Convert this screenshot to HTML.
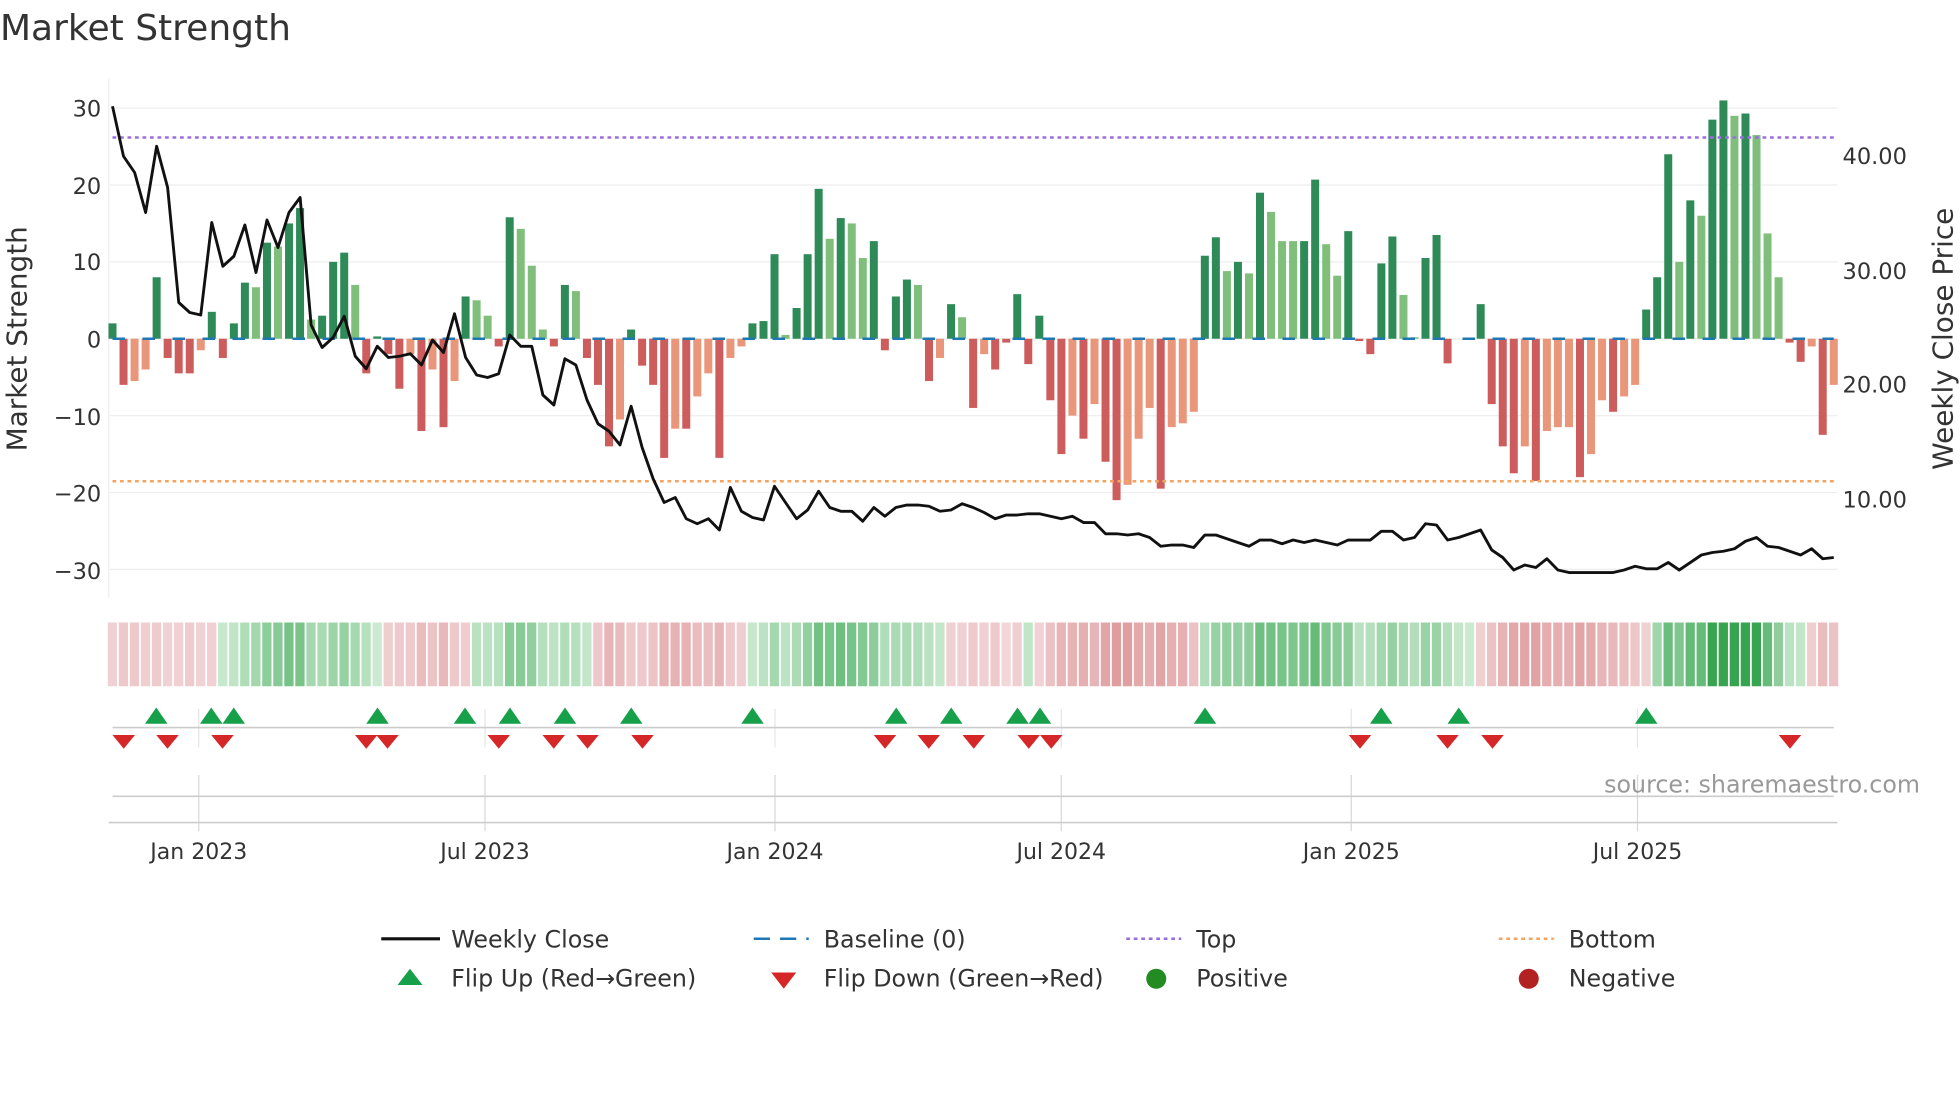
<!DOCTYPE html>
<html><head><meta charset="utf-8"><style>
html,body{margin:0;padding:0;background:#fff;}
svg{display:block;}
text{font-family:"DejaVu Sans","Liberation Sans",sans-serif;fill:#333;}
</style></head><body>
<svg id="s" width="1960" height="1102" viewBox="0 0 1568 881.6" xmlns="http://www.w3.org/2000/svg">
<rect width="1568" height="881.6" fill="#fff"/>
<g id="grid"></g>
<g id="bars"></g>
<g id="heat"></g>
<g id="lines"></g>
<g id="marks"></g>
<text x="0" y="32" font-size="28.8">Market Strength</text>
<g font-size="18" text-anchor="end">
<text x="81" y="93">30</text><text x="81" y="155">20</text><text x="81" y="216">10</text><text x="81" y="278">0</text>
<text x="81" y="340">−10</text><text x="81" y="401">−20</text><text x="81" y="463">−30</text>
</g>
<g font-size="18">
<text x="1474" y="131">40.00</text><text x="1474" y="223">30.00</text><text x="1474" y="314">20.00</text><text x="1474" y="406">10.00</text>
</g>
<text transform="translate(21,271) rotate(-90)" font-size="22.3" text-anchor="middle">Market Strength</text>
<text transform="translate(1562,271) rotate(-90)" font-size="22.3" text-anchor="middle">Weekly Close Price</text>
<g font-size="17.6" text-anchor="middle">
<text x="159" y="687">Jan 2023</text><text x="388" y="687">Jul 2023</text><text x="620" y="687">Jan 2024</text>
<text x="849" y="687">Jul 2024</text><text x="1081" y="687">Jan 2025</text><text x="1310" y="687">Jul 2025</text>
</g>
<text x="1536" y="634" font-size="19" text-anchor="end" style="fill:#999">source: sharemaestro.com</text>
<g font-size="19">
<line x1="305" y1="751" x2="352" y2="751" stroke="#111" stroke-width="2.5"/><text x="361" y="758">Weekly Close</text>
<line x1="603" y1="751" x2="647" y2="751" stroke="#1f77b4" stroke-width="2" stroke-dasharray="13,8"/><text x="659" y="758">Baseline (0)</text>
<line x1="901" y1="751" x2="945" y2="751" stroke="#9b6ee0" stroke-width="2" stroke-dasharray="3,3"/><text x="957" y="758">Top</text>
<line x1="1199" y1="751" x2="1243" y2="751" stroke="#f4a460" stroke-width="2" stroke-dasharray="3,3"/><text x="1255" y="758">Bottom</text>
<polygon points="318,788 338,788 328,775" fill="#16a04a"/><text x="361" y="789">Flip Up (Red→Green)</text>
<polygon points="617,778 637,778 627,791" fill="#d62728"/><text x="659" y="789">Flip Down (Green→Red)</text>
<circle cx="925" cy="783" r="8" fill="#228b22"/><text x="957" y="789">Positive</text>
<circle cx="1223" cy="783" r="8" fill="#b22222"/><text x="1255" y="789">Negative</text>
</g>
</svg>
<script>
(function(){
var NS="http://www.w3.org/2000/svg";
function el(p,t,a){var e=document.createElementNS(NS,t);for(var k in a)e.setAttribute(k,a[k]);document.getElementById(p).appendChild(e);return e;}
var X0=90,X1=1467;
var V=[[2,'G'],[-6,'R'],[-5.5,'S'],[-4,'S'],[8,'G'],[-2.5,'R'],[-4.5,'R'],[-4.5,'R'],[-1.5,'S'],[3.5,'G'],[-2.5,'R'],[2,'G'],[7.3,'G'],[6.7,'L'],[12.5,'G'],[12,'L'],[15,'G'],[17,'G'],[2.5,'L'],[3,'G'],[10,'G'],[11.2,'G'],[7,'L'],[-4.5,'R'],[0.3,'G'],[-2,'R'],[-6.5,'R'],[-2,'S'],[-12,'R'],[-4,'S'],[-11.5,'R'],[-5.5,'S'],[5.5,'G'],[5,'L'],[3,'L'],[-1,'R'],[15.8,'G'],[14.3,'L'],[9.5,'L'],[1.2,'L'],[-1,'R'],[7,'G'],[6.2,'L'],[-2.5,'R'],[-6,'R'],[-14,'R'],[-10.5,'S'],[1.2,'G'],[-3.5,'R'],[-6,'R'],[-15.5,'R'],[-11.7,'S'],[-11.7,'R'],[-7.5,'S'],[-4.5,'S'],[-15.5,'R'],[-2.5,'S'],[-1,'S'],[2,'G'],[2.3,'G'],[11,'G'],[0.5,'L'],[4,'G'],[11,'G'],[19.5,'G'],[13,'L'],[15.7,'G'],[15,'L'],[10.5,'L'],[12.7,'G'],[-1.5,'R'],[5.5,'G'],[7.7,'G'],[7,'L'],[-5.5,'R'],[-2.5,'S'],[4.5,'G'],[2.8,'L'],[-9,'R'],[-2,'S'],[-4,'R'],[-0.5,'R'],[5.8,'G'],[-3.3,'R'],[3,'G'],[-8,'R'],[-15,'R'],[-10,'S'],[-13,'R'],[-8.5,'S'],[-16,'R'],[-21,'R'],[-19,'S'],[-13,'S'],[-9,'S'],[-19.5,'R'],[-11.5,'S'],[-11,'S'],[-9.5,'S'],[10.8,'G'],[13.2,'G'],[8.8,'L'],[10,'G'],[8.5,'L'],[19,'G'],[16.5,'L'],[12.7,'L'],[12.7,'L'],[12.7,'G'],[20.7,'G'],[12.3,'L'],[8.2,'L'],[14,'G'],[-0.3,'R'],[-2,'R'],[9.8,'G'],[13.3,'G'],[5.7,'L'],[0.2,'L'],[10.5,'G'],[13.5,'G'],[-3.2,'R'],[0,'R'],[0,'R'],[4.5,'G'],[-8.5,'R'],[-14,'R'],[-17.5,'R'],[-14,'S'],[-18.5,'R'],[-12,'S'],[-11.5,'S'],[-11.5,'S'],[-18,'R'],[-15,'S'],[-8,'S'],[-9.5,'R'],[-7.5,'S'],[-6,'S'],[3.8,'G'],[8,'G'],[24,'G'],[10,'L'],[18,'G'],[16,'L'],[28.5,'G'],[31,'G'],[29,'L'],[29.3,'G'],[26.5,'L'],[13.7,'L'],[8,'L'],[-0.5,'R'],[-3,'R'],[-1,'S'],[-12.5,'R'],[-6,'S']];
var n=V.length,st=(X1-X0)/(n-1);
var C={G:'#2e8b57',L:'#7fbf7b',R:'#cd5c5c',S:'#e9967a'};
var Y0=271,U=6.15;
[30,20,10,0,-10,-20,-30].forEach(function(v){var y=Y0-v*U;el('grid','line',{x1:88,x2:1470,y1:y,y2:y,stroke:'#eeeeee','stroke-width':1});});
el('grid','line',{x1:87,x2:87,y1:63,y2:478,stroke:'#eeeeee','stroke-width':1});
[159,388,620,849,1081,1310].forEach(function(x){
 el('grid','line',{x1:x,x2:x,y1:567,y2:598,stroke:'#e6e6e6','stroke-width':1});
 el('grid','line',{x1:x,x2:x,y1:620,y2:665,stroke:'#d8d8d8','stroke-width':1});
});
el('grid','line',{x1:90,x2:1467,y1:582,y2:582,stroke:'#cccccc','stroke-width':1.3});
el('grid','line',{x1:90,x2:1467,y1:637,y2:637,stroke:'#cccccc','stroke-width':1.3});
el('grid','line',{x1:87,x2:1470,y1:658,y2:658,stroke:'#cccccc','stroke-width':1.3});
el('lines','line',{x1:90,x2:1467,y1:Y0,y2:Y0,stroke:'#1f77b4','stroke-width':2,'stroke-dasharray':'10,14'});
V.forEach(function(d,i){var x=X0+i*st,v=d[0],h=Math.abs(v)*U;if(h<0.5)return;
 el('bars','rect',{x:x-3.2,width:6.4,y:v>0?Y0-h:Y0,height:h,fill:C[d[1]]});});
V.forEach(function(d,i){var s=0,c=0;for(var j=i-2;j<=i+1;j++){if(j>=0&&j<n){s+=V[j][0];c++;}}var m=s/c;
 var t=Math.min(1,(Math.abs(m)*0.6+Math.abs(d[0])*0.4)/25),col;
 if(m>=0){col='rgb('+Math.round(205-150*t)+','+Math.round(235-70*t)+','+Math.round(210-130*t)+')';}
 else{col='rgb('+Math.round(242-25*t)+','+Math.round(215-80*t)+','+Math.round(217-80*t)+')';}
 el('heat','rect',{x:X0-3.8+i*st,width:st-1.4,y:498,height:51,fill:col});});
el('lines','line',{x1:90,x2:1470,y1:110,y2:110,stroke:'#9b6ee0','stroke-width':2,'stroke-dasharray':'3,3'});
el('lines','line',{x1:90,x2:1470,y1:385,y2:385,stroke:'#f4a460','stroke-width':2,'stroke-dasharray':'3,3'});
var P=[85,125,138,170,117,150,242,250,252,178,213,205,180,218,176,198,170,158,260,278,270,253,285,295,277,286,285,283,292,272,282,251,286,300,302,299,268,277,277,316,324,287,292,320,339,345,356,325,358,383,402,398,415,419,415,424,390,409,414,416,389,402,415,408,393,406,409,409,417,406,413,406,404,404,405,409,408,403,406,410,415,412,412,411,411,413,415,413,418,418,427,427,428,427,430,437,436,436,438,428,428,431,434,437,432,432,435,432,434,432,434,436,432,432,432,425,425,432,430,419,420,432,430,427,424,440,446,456,452,454,447,456,458,458,458,458,458,456,453,455,455,450,456,450,444,442,441,439,433,430,437,438,441,444,439,447,446];
var ps=(X1-X0)/(P.length-1),pts=P.map(function(y,i){return (X0+i*ps).toFixed(1)+','+y;}).join(' ');
el('lines','polyline',{points:pts,fill:'none',stroke:'#111','stroke-width':2.3,'stroke-linejoin':'round'});
[125,169,187,302,372,408,452,505,602,717,761,814,832,964,1105,1167,1317].forEach(function(x){
 el('marks','polygon',{points:(x-9)+',579 '+(x+9)+',579 '+x+',566',fill:'#16a04a'});});
[99,134,178,293,310,399,443,470,514,708,743,779,823,841,1088,1158,1194,1432].forEach(function(x){
 el('marks','polygon',{points:(x-9)+',588 '+(x+9)+',588 '+x+',599',fill:'#d62728'});});
})();
</script>
</body></html>
